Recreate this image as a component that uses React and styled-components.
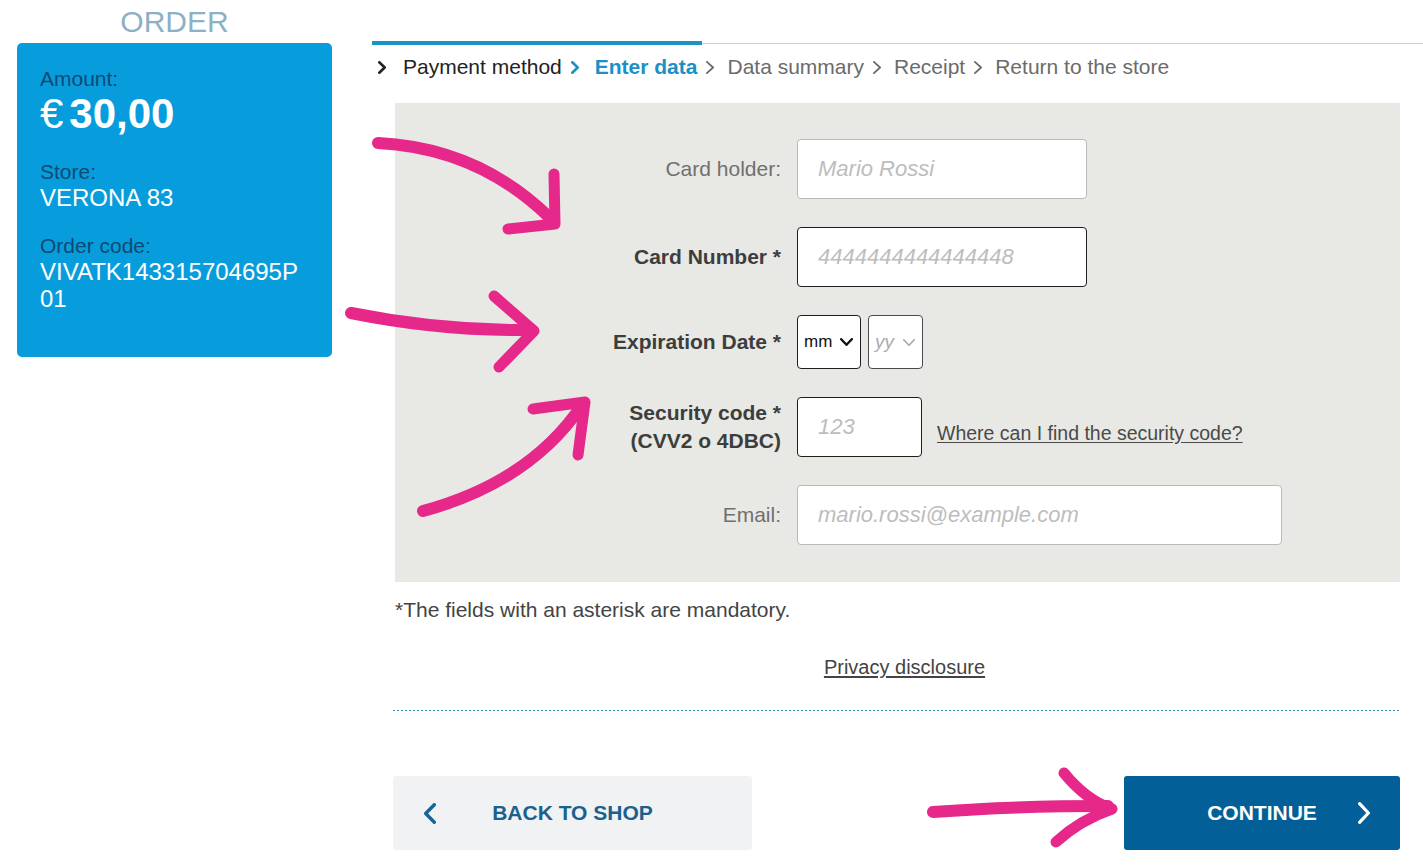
import React from "react";
import styled, { createGlobalStyle } from "styled-components";

const GlobalStyle = createGlobalStyle`
  html, body {
    margin: 0;
    padding: 0;
    background: #ffffff;
  }
  body {
    font-family: "Liberation Sans", Arial, sans-serif;
  }
  * {
    box-sizing: border-box;
  }
`;

const Chevron = ({ dir = "right", color = "#222", w = 8, h = 13, stroke = 2.5 }) => (
  <svg width={w} height={h} viewBox={`0 0 ${w} ${h}`} fill="none">
    {dir === "right" ? (
      <polyline
        points={`${stroke / 2},${stroke / 2} ${w - stroke / 2},${h / 2} ${stroke / 2},${h - stroke / 2}`}
        stroke={color}
        strokeWidth={stroke}
        strokeLinecap="round"
        strokeLinejoin="round"
      />
    ) : dir === "left" ? (
      <polyline
        points={`${w - stroke / 2},${stroke / 2} ${stroke / 2},${h / 2} ${w - stroke / 2},${h - stroke / 2}`}
        stroke={color}
        strokeWidth={stroke}
        strokeLinecap="round"
        strokeLinejoin="round"
      />
    ) : (
      <polyline
        points={`${stroke / 2},${stroke / 2} ${w / 2},${h - stroke / 2} ${w - stroke / 2},${stroke / 2}`}
        stroke={color}
        strokeWidth={stroke}
        strokeLinecap="round"
        strokeLinejoin="round"
      />
    )}
  </svg>
);

const steps = [
  { label: "Payment method", state: "done" },
  { label: "Enter data", state: "active" },
  { label: "Data summary", state: "todo" },
  { label: "Receipt", state: "todo" },
  { label: "Return to the store", state: "todo" },
];

const stepColor = { done: "#222222", active: "#1b8fc6", todo: "#6b6b6b" };

const App = () => {
  return (
    <Page>
      <GlobalStyle />
      <Sidebar>
        <OrderTitle>ORDER</OrderTitle>
        <OrderCard>
          <InfoGroup>
            <InfoLabel>Amount:</InfoLabel>
            <Amount>
              <span className="euro">€</span>30,00
            </Amount>
          </InfoGroup>
          <InfoGroup>
            <InfoLabel>Store:</InfoLabel>
            <InfoValue>VERONA 83</InfoValue>
          </InfoGroup>
          <InfoGroup>
            <InfoLabel>Order code:</InfoLabel>
            <InfoValue>VIVATK143315704695P01</InfoValue>
          </InfoGroup>
        </OrderCard>
      </Sidebar>

      <Main>
        <Progress>
          <div className="done" />
          <div className="rest" />
        </Progress>

        <Steps>
          {steps.map((s, i) => (
            <Step key={s.label} $state={s.state} $first={i === 0}>
              <Chevron
                color={stepColor[s.state]}
                w={8}
                h={13}
                stroke={s.state === "todo" ? 1.8 : 2.6}
              />
              <span>{s.label}</span>
            </Step>
          ))}
        </Steps>

        <FormPanel>
          <FieldLabel>Card holder:</FieldLabel>
          <FieldCell>
            <TextInput placeholder="Mario Rossi" $width={290} />
          </FieldCell>

          <FieldLabel $required>Card Number *</FieldLabel>
          <FieldCell>
            <TextInput placeholder="4444444444444448" $width={290} $strong />
          </FieldCell>

          <FieldLabel $required>Expiration Date *</FieldLabel>
          <FieldCell>
            <SelectBox $width={64} $strong>
              <span>mm</span>
              <Chevron dir="down" color="#111" w={13} h={8} stroke={2.4} />
            </SelectBox>
            <SelectBox $width={55} $muted>
              <span>yy</span>
              <Chevron dir="down" color="#a8a8a8" w={12} h={7} stroke={1.6} />
            </SelectBox>
          </FieldCell>

          <FieldLabel $required>
            Security code *
            <br />
            (CVV2 o 4DBC)
          </FieldLabel>
          <FieldCell>
            <TextInput placeholder="123" $width={125} $strong />
            <HelpLink href="#">Where can I find the security code?</HelpLink>
          </FieldCell>

          <FieldLabel>Email:</FieldLabel>
          <FieldCell>
            <TextInput placeholder="mario.rossi@example.com" $width={485} />
          </FieldCell>
        </FormPanel>

        <Mandatory>*The fields with an asterisk are mandatory.</Mandatory>

        <PrivacyRow>
          <a href="#">Privacy disclosure</a>
        </PrivacyRow>

        <DottedRule />

        <ButtonRow>
          <ActionButton $variant="back">
            <span className="icon left">
              <Chevron dir="left" color="#1a6496" w={12} h={21} stroke={3.4} />
            </span>
            <span className="text">BACK TO SHOP</span>
            <span />
          </ActionButton>
          <ActionButton $variant="continue">
            <span />
            <span className="text">CONTINUE</span>
            <span className="icon right">
              <Chevron dir="right" color="#ffffff" w={12} h={22} stroke={3.2} />
            </span>
          </ActionButton>
        </ButtonRow>
      </Main>

      <Annotations width="1423" height="865" viewBox="0 0 1423 865">
        <g
          fill="none"
          stroke="#e6288a"
          strokeWidth="12"
          strokeLinecap="round"
          strokeLinejoin="round"
        >
          <path d="M378 143 Q 478 148 549 217" />
          <path d="M508 229 L 555 224 L 554 174" strokeWidth="11" />

          <path d="M351 313 Q 440 331 531 330" />
          <path d="M494 296 L 534 331 L 499 367" strokeWidth="11" />

          <path d="M423 511 Q 530 482 582 405" />
          <path d="M533 409 L 585 402 L 578 455" strokeWidth="11" />

          <path d="M933 812 Q 1010 806 1108 806" />
          <path d="M1064 773 Q 1086 800 1112 809 Q 1080 820 1056 842" strokeWidth="11" />
        </g>
      </Annotations>
    </Page>
  );
};

const Page = styled.div`
  position: relative;
  display: flex;
  width: 1423px;
  height: 865px;
  overflow: hidden;
  background: #ffffff;
`;

const Sidebar = styled.aside`
  width: 315px;
  margin-left: 17px;
  flex-shrink: 0;
`;

const OrderTitle = styled.h2`
  margin: 0;
  height: 43px;
  padding-top: 4px;
  font-size: 30px;
  font-weight: 400;
  line-height: 36px;
  text-align: center;
  color: #8db0c5;
`;

const OrderCard = styled.div`
  height: 314px;
  padding: 23px 24px 0 23px;
  background: #079ddc;
  border-radius: 5px;
  display: flex;
  flex-direction: column;
  gap: 22px;
`;

const InfoGroup = styled.div`
  display: flex;
  flex-direction: column;
`;

const InfoLabel = styled.div`
  font-size: 21px;
  line-height: 25px;
  color: #0d4a74;
`;

const InfoValue = styled.div`
  font-size: 24px;
  line-height: 27px;
  color: #ffffff;
  word-break: break-all;
`;

const Amount = styled.div`
  font-size: 42px;
  line-height: 46px;
  font-weight: 700;
  color: #ffffff;

  .euro {
    font-weight: 400;
    margin-right: 6px;
  }
`;

const Main = styled.main`
  flex: 1;
  margin-left: 40px;
  display: flex;
  flex-direction: column;
`;

const Progress = styled.div`
  margin-top: 41px;
  height: 4px;
  display: flex;
  align-items: center;

  .done {
    width: 330px;
    height: 4px;
    background: #1a93c6;
  }

  .rest {
    flex: 1;
    height: 1px;
    background: #cfcfcf;
  }
`;

const Steps = styled.nav`
  margin-top: 10px;
  height: 24px;
  margin-bottom: 24px;
  padding-left: 6px;
  display: flex;
  align-items: center;
`;

const Step = styled.div`
  display: flex;
  align-items: center;
  margin-right: 9px;
  font-size: 21px;
  line-height: 24px;
  color: ${({ $state }) => stepColor[$state]};
  font-weight: ${({ $state }) => ($state === "active" ? 700 : 400)};

  svg {
    margin-right: ${({ $first, $state }) =>
      $first ? "17px" : $state === "active" ? "16px" : "13px"};
    margin-top: 1px;
  }
`;

const FormPanel = styled.section`
  margin: 0 23px;
  padding: 36px 0 37px;
  background: #e8e8e4;
  display: grid;
  grid-template-columns: 386px 1fr;
  column-gap: 16px;
  row-gap: 28px;
  align-items: center;
`;

const FieldLabel = styled.label`
  text-align: right;
  font-size: 21px;
  line-height: 28px;
  font-weight: ${({ $required }) => ($required ? 700 : 400)};
  color: ${({ $required }) => ($required ? "#3d3d3d" : "#707070")};
`;

const FieldCell = styled.div`
  display: flex;
  align-items: center;
  gap: 7px;
`;

const TextInput = styled.input`
  width: ${({ $width }) => $width}px;
  height: 60px;
  padding: 0 20px;
  border: 1px solid ${({ $strong }) => ($strong ? "#1e1e1e" : "#b9b9b9")};
  border-radius: 4px;
  background: #ffffff;
  font-family: "Liberation Sans", Arial, sans-serif;
  font-size: 22px;
  outline: none;

  &::placeholder {
    color: #bdbdbd;
    font-style: italic;
  }
`;

const SelectBox = styled.div`
  width: ${({ $width }) => $width}px;
  height: 54px;
  padding: 0 7px 0 6px;
  border: 1px solid ${({ $strong }) => ($strong ? "#1e1e1e" : "#4a4a4a")};
  border-radius: 4px;
  background: #ffffff;
  display: flex;
  align-items: center;
  justify-content: space-between;

  span {
    font-size: ${({ $muted }) => ($muted ? "19px" : "17px")};
    font-style: ${({ $muted }) => ($muted ? "italic" : "normal")};
    color: ${({ $muted }) => ($muted ? "#ababab" : "#111111")};
  }
`;

const HelpLink = styled.a`
  margin-left: 8px;
  padding-top: 13px;
  font-size: 19.5px;
  color: #4a4a4a;
  text-decoration: underline;
  text-underline-offset: 2px;
`;

const Mandatory = styled.p`
  margin: 16px 0 0 23px;
  font-size: 21px;
  line-height: 24px;
  color: #444444;
`;

const PrivacyRow = styled.div`
  margin-top: 33px;
  padding-left: 14px;
  text-align: center;
  font-size: 20px;
  line-height: 24px;

  a {
    color: #444444;
    text-decoration: underline;
    text-underline-offset: 2px;
  }
`;

const DottedRule = styled.div`
  margin: 31px 23px 0 21px;
  height: 1px;
  background: repeating-linear-gradient(
    to right,
    #2f93b6 0 2px,
    transparent 2px 4px
  );
`;

const ButtonRow = styled.div`
  margin: 65px 23px 0 21px;
  display: flex;
  justify-content: space-between;
`;

const ActionButton = styled.button`
  width: ${({ $variant }) => ($variant === "back" ? "359px" : "276px")};
  height: 74px;
  padding: 0;
  border: 0;
  border-radius: 3px;
  display: grid;
  grid-template-columns: 1fr auto 1fr;
  align-items: center;
  background: ${({ $variant }) => ($variant === "back" ? "#f0f2f4" : "#035f98")};
  color: ${({ $variant }) => ($variant === "back" ? "#1a6190" : "#ffffff")};
  font-family: "Liberation Sans", Arial, sans-serif;
  font-size: 21px;
  font-weight: 700;
  cursor: pointer;

  .icon {
    display: flex;
  }

  .left {
    justify-self: start;
    padding-left: 31px;
  }

  .right {
    justify-self: end;
    padding-right: 30px;
  }
`;

const Annotations = styled.svg`
  position: absolute;
  top: 0;
  left: 0;
  pointer-events: none;
`;

export default App;
